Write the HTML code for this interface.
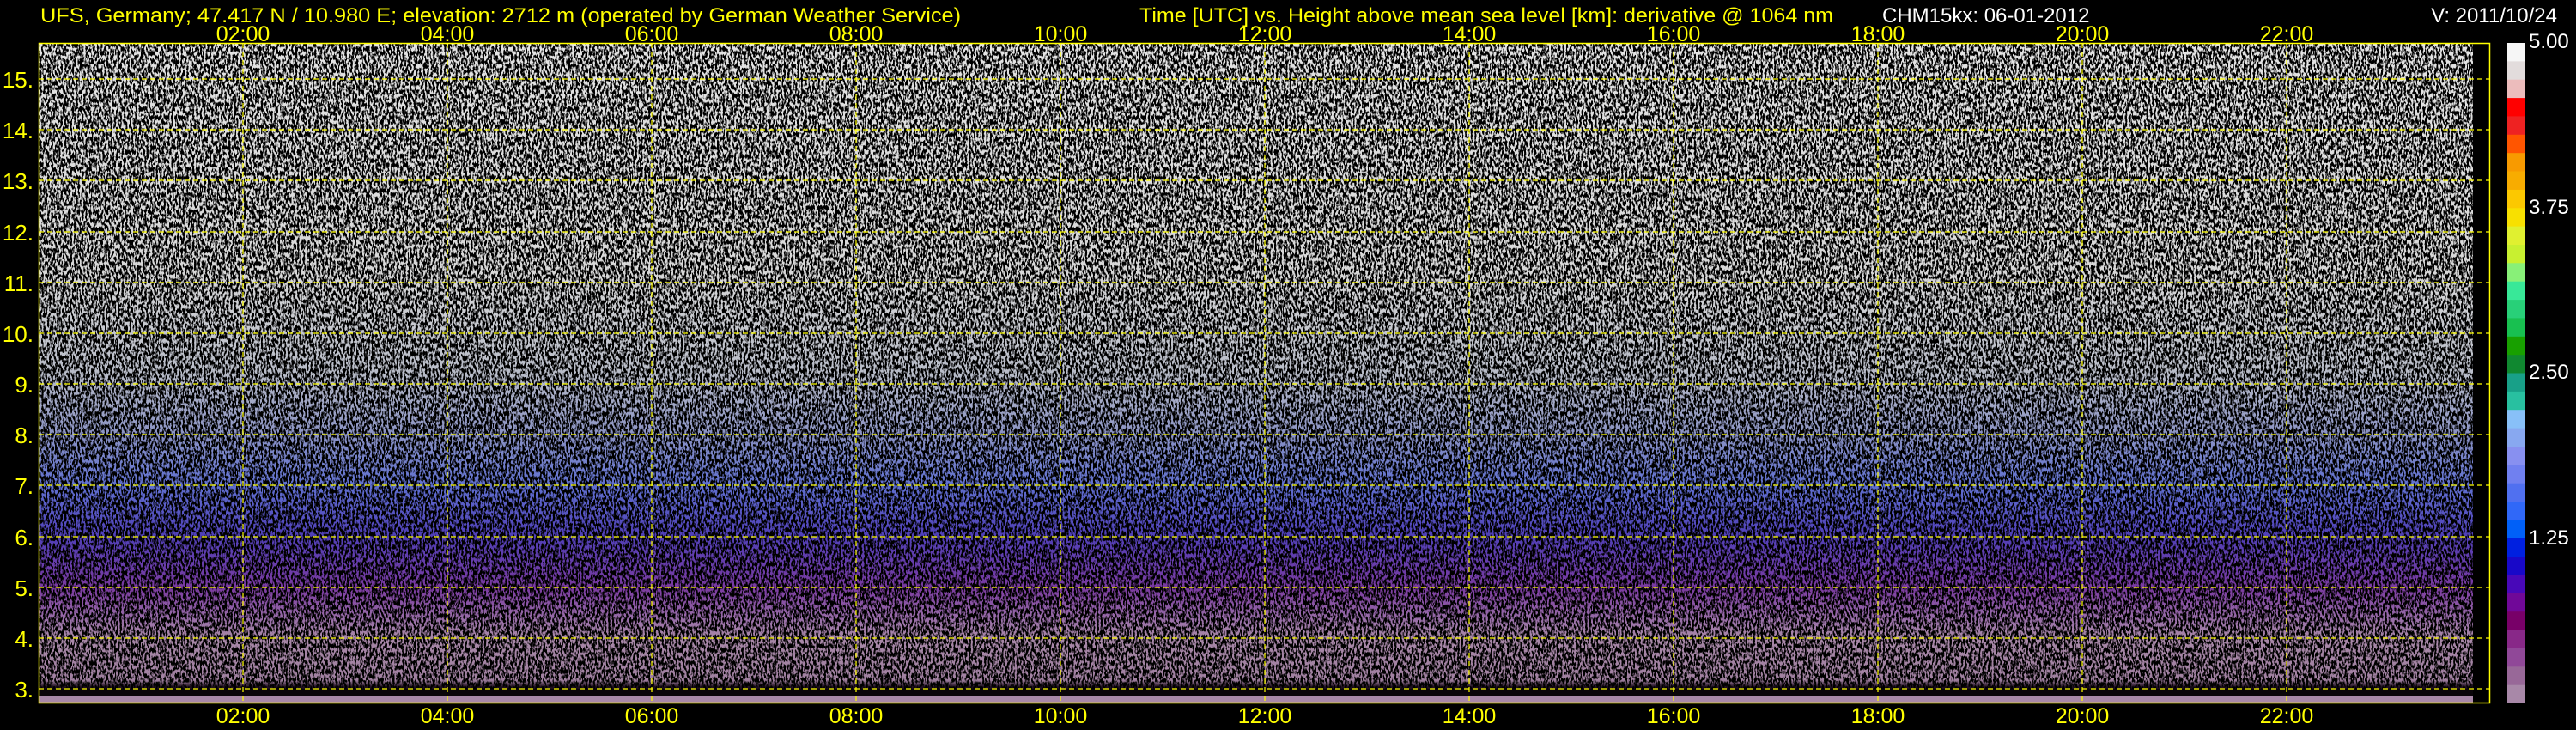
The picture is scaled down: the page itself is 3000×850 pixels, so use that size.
<!DOCTYPE html>
<html><head><meta charset="utf-8"><style>
html,body{margin:0;padding:0;background:#000;width:3000px;height:850px;overflow:hidden}
svg{display:block}
text{font-family:"Liberation Sans",sans-serif}
</style></head><body>
<svg width="3000" height="850" viewBox="0 0 3000 850" xmlns="http://www.w3.org/2000/svg">
<defs>
<linearGradient id="g" x1="0" y1="50" x2="0" y2="819" gradientUnits="userSpaceOnUse">
<stop offset="0" stop-color="#e4e4e4"/>
<stop offset="0.35" stop-color="#d8d8d8"/>
<stop offset="0.50" stop-color="#b8bcc8"/>
<stop offset="0.59" stop-color="#8c94c4"/>
<stop offset="0.67" stop-color="#6070d0"/>
<stop offset="0.745" stop-color="#5040b8"/>
<stop offset="0.825" stop-color="#7a3aa0"/>
<stop offset="0.875" stop-color="#9a70a8"/>
<stop offset="0.90" stop-color="#a888a8"/>
<stop offset="0.965" stop-color="#a080a0"/>
<stop offset="0.975" stop-color="#201020"/>
<stop offset="1" stop-color="#000"/>
</linearGradient>
<filter id="n" x="0" y="0" width="100%" height="100%">
<feTurbulence type="fractalNoise" baseFrequency="0.45 0.2" numOctaves="2" seed="3"/>
<feColorMatrix type="matrix" values="0 0 0 0 0  0 0 0 0 0  0 0 0 0 0  9 0 0 0 -3.9"/>
</filter>
</defs>
<rect x="45" y="50" width="2835" height="769" fill="url(#g)"/>
<rect x="45" y="50" width="2835" height="752" filter="url(#n)"/>
<rect x="45" y="802" width="2835" height="8" fill="#0a050a"/>
<rect x="45" y="810" width="2835" height="8" fill="#a888a8"/>
<rect x="45.5" y="50.5" width="2854" height="768" fill="none" stroke="#ffff00" stroke-width="1.5"/>
<g stroke="#ffff00" stroke-width="1.2" stroke-dasharray="6,4">
<line x1="45" x2="2899" y1="92" y2="92"/><line x1="45" x2="2899" y1="151" y2="151"/>
<line x1="45" x2="2899" y1="210" y2="210"/><line x1="45" x2="2899" y1="270" y2="270"/>
<line x1="45" x2="2899" y1="329" y2="329"/><line x1="45" x2="2899" y1="388" y2="388"/>
<line x1="45" x2="2899" y1="447" y2="447"/><line x1="45" x2="2899" y1="506" y2="506"/>
<line x1="45" x2="2899" y1="565" y2="565"/><line x1="45" x2="2899" y1="625" y2="625"/>
<line x1="45" x2="2899" y1="684" y2="684"/><line x1="45" x2="2899" y1="743" y2="743"/>
<line x1="45" x2="2899" y1="802" y2="802"/>
<line y1="50" y2="819" x1="283" x2="283"/><line y1="50" y2="819" x1="521" x2="521"/>
<line y1="50" y2="819" x1="759" x2="759"/><line y1="50" y2="819" x1="997" x2="997"/>
<line y1="50" y2="819" x1="1235" x2="1235"/><line y1="50" y2="819" x1="1473" x2="1473"/>
<line y1="50" y2="819" x1="1711" x2="1711"/><line y1="50" y2="819" x1="1949" x2="1949"/>
<line y1="50" y2="819" x1="2187" x2="2187"/><line y1="50" y2="819" x1="2425" x2="2425"/>
<line y1="50" y2="819" x1="2663" x2="2663"/>
</g>
<g fill="#ffff00" font-size="24">
<text x="47" y="26" textLength="1072" lengthAdjust="spacingAndGlyphs">UFS, Germany; 47.417 N / 10.980 E; elevation: 2712 m  (operated by German Weather Service)</text>
<text x="1327" y="26" textLength="808" lengthAdjust="spacingAndGlyphs">Time [UTC] vs. Height above mean sea level [km]: derivative @ 1064 nm</text>
</g>
<g fill="#ffffff" font-size="24">
<text x="2192" y="26">CHM15kx: 06-01-2012</text>
<text x="2978" y="26" text-anchor="end">V: 2011/10/24</text>
</g>
<g fill="#ffff00" font-size="25" text-anchor="middle">
<g transform="translate(0,48)">
<text x="283">02:00</text><text x="521">04:00</text><text x="759">06:00</text><text x="997">08:00</text><text x="1235">10:00</text><text x="1473">12:00</text><text x="1711">14:00</text><text x="1949">16:00</text><text x="2187">18:00</text><text x="2425">20:00</text><text x="2663">22:00</text>
</g>
<g transform="translate(0,842)">
<text x="283">02:00</text><text x="521">04:00</text><text x="759">06:00</text><text x="997">08:00</text><text x="1235">10:00</text><text x="1473">12:00</text><text x="1711">14:00</text><text x="1949">16:00</text><text x="2187">18:00</text><text x="2425">20:00</text><text x="2663">22:00</text>
</g>
</g>
<g fill="#ffff00" font-size="26" text-anchor="end">
<text x="39" y="102">15.</text><text x="39" y="161">14.</text><text x="39" y="220">13.</text><text x="39" y="280">12.</text><text x="39" y="339">11.</text><text x="39" y="398">10.</text><text x="39" y="457">9.</text><text x="39" y="516">8.</text><text x="39" y="575">7.</text><text x="39" y="635">6.</text><text x="39" y="694">5.</text><text x="39" y="753">4.</text><text x="39" y="812">3.</text>
</g>
<g>
<rect x="2920" y="50.0" width="21" height="21.8" fill="#f6f6f6"/>
<rect x="2920" y="71.4" width="21" height="21.8" fill="#e2dcdc"/>
<rect x="2920" y="92.7" width="21" height="21.8" fill="#ecbcbc"/>
<rect x="2920" y="114.1" width="21" height="21.8" fill="#ff0000"/>
<rect x="2920" y="135.4" width="21" height="21.8" fill="#ee2222"/>
<rect x="2920" y="156.8" width="21" height="21.8" fill="#ff5500"/>
<rect x="2920" y="178.2" width="21" height="21.8" fill="#f89a00"/>
<rect x="2920" y="199.5" width="21" height="21.8" fill="#f8ac00"/>
<rect x="2920" y="220.9" width="21" height="21.8" fill="#fcc800"/>
<rect x="2920" y="242.3" width="21" height="21.8" fill="#f8e000"/>
<rect x="2920" y="263.6" width="21" height="21.8" fill="#e0f030"/>
<rect x="2920" y="285.0" width="21" height="21.8" fill="#c8f030"/>
<rect x="2920" y="306.3" width="21" height="21.8" fill="#88f078"/>
<rect x="2920" y="327.7" width="21" height="21.8" fill="#38e898"/>
<rect x="2920" y="349.1" width="21" height="21.8" fill="#28d078"/>
<rect x="2920" y="370.4" width="21" height="21.8" fill="#18c050"/>
<rect x="2920" y="391.8" width="21" height="21.8" fill="#18a000"/>
<rect x="2920" y="413.2" width="21" height="21.8" fill="#108830"/>
<rect x="2920" y="434.5" width="21" height="21.8" fill="#18a088"/>
<rect x="2920" y="455.9" width="21" height="21.8" fill="#28c0a0"/>
<rect x="2920" y="477.2" width="21" height="21.8" fill="#88c0f8"/>
<rect x="2920" y="498.6" width="21" height="21.8" fill="#88a8f0"/>
<rect x="2920" y="520.0" width="21" height="21.8" fill="#8890f0"/>
<rect x="2920" y="541.3" width="21" height="21.8" fill="#7080f0"/>
<rect x="2920" y="562.7" width="21" height="21.8" fill="#5070f0"/>
<rect x="2920" y="584.1" width="21" height="21.8" fill="#3068f8"/>
<rect x="2920" y="605.4" width="21" height="21.8" fill="#0060f8"/>
<rect x="2920" y="626.8" width="21" height="21.8" fill="#0020e0"/>
<rect x="2920" y="648.1" width="21" height="21.8" fill="#1808c8"/>
<rect x="2920" y="669.5" width="21" height="21.8" fill="#4808b8"/>
<rect x="2920" y="690.9" width="21" height="21.8" fill="#700898"/>
<rect x="2920" y="712.2" width="21" height="21.8" fill="#780068"/>
<rect x="2920" y="733.6" width="21" height="21.8" fill="#882888"/>
<rect x="2920" y="755.0" width="21" height="21.8" fill="#904898"/>
<rect x="2920" y="776.3" width="21" height="21.8" fill="#986898"/>
<rect x="2920" y="797.7" width="21" height="21.3" fill="#a888a8"/>
</g>
<g fill="#ffffff" font-size="24">
<text x="2945" y="56">5.00</text>
<text x="2945" y="249">3.75</text>
<text x="2945" y="441">2.50</text>
<text x="2945" y="634">1.25</text>
</g>
</svg>
</body></html>
